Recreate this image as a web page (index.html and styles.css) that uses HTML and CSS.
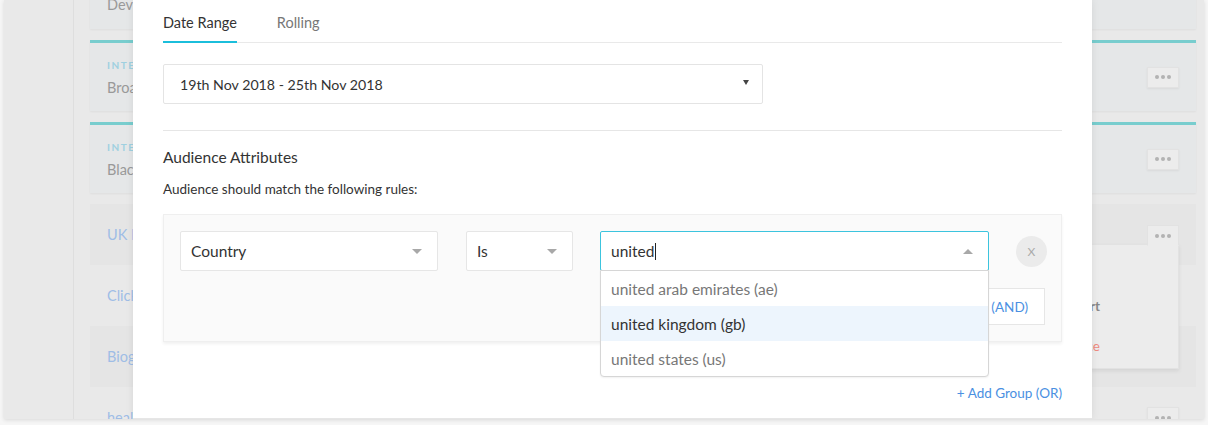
FILE: index.html
```html
<!DOCTYPE html>
<html lang="en">
<head>
<meta charset="utf-8">
<title>Audience</title>
<link rel="stylesheet" href="styles.css">
</head>
<body>
<div class="screen">
  <div class="app">
    <aside class="sidebar"></aside>
    <main class="main">
      <div class="list">
        <div class="card card-top"><div class="card-body"><span class="name">Device users</span></div></div>
        <div class="card card-active">
          <div class="card-body">
            <div class="info"><span class="tag">INTEREST</span><span class="name">Broadband</span></div>
            <span class="dots"><i></i><i></i><i></i></span>
          </div>
        </div>
        <div class="card card-active">
          <div class="card-body">
            <div class="info"><span class="tag">INTEREST</span><span class="name">Black Friday</span></div>
            <span class="dots"><i></i><i></i><i></i></span>
          </div>
        </div>
        <div class="row row-stripe">
          <span class="link">UK Broadband</span>
          <div class="menu-wrap">
            <span class="dots dots-open"><i></i><i></i><i></i></span>
            <div class="popover">
              <span class="pop-item">Export</span>
              <span class="pop-item pop-danger">Remove audience</span>
            </div>
          </div>
        </div>
        <div class="row"><span class="link">Clickers</span></div>
        <div class="row row-stripe"><span class="link">Biography</span></div>
        <div class="row">
          <span class="link">health</span>
          <span class="dots"><i></i><i></i><i></i></span>
        </div>
      </div>
    </main>
  </div>

  <div class="modal">
    <div class="tabs">
      <span class="tab tab-active">Date Range</span>
      <span class="tab">Rolling</span>
    </div>
    <div class="date-select">
      <span>19th Nov 2018 - 25th Nov 2018</span>
      <span class="caret-dark"></span>
    </div>
    <hr class="divider">
    <h2 class="section-title">Audience Attributes</h2>
    <p class="hint">Audience should match the following rules:</p>
    <div class="rules">
      <div class="rule-row">
        <div class="select sel-attr"><span>Country</span><span class="caret"></span></div>
        <div class="select sel-op"><span>Is</span><span class="caret"></span></div>
        <div class="combo">
          <div class="select sel-value"><span class="typed">united<span class="cursor"></span></span><span class="caret caret-up"></span></div>
          <ul class="options">
            <li>united arab emirates (ae)</li>
            <li class="opt-hover">united kingdom (gb)</li>
            <li>united states (us)</li>
          </ul>
        </div>
        <span class="remove">X</span>
      </div>
      <div class="rule-actions">
        <span class="add-and">+ Add Rule (AND)</span>
      </div>
    </div>
    <div class="group-actions"><span class="add-or">+ Add Group (OR)</span></div>
  </div>
</div>
</body>
</html>
```
FILE: styles.css
```css
* { box-sizing: border-box; }
html, body { margin: 0; padding: 0; }
body {
  background: #f6f6f6;
  font-family: Lato, "Open Sans", sans-serif;
  color: #333;
  width: 1208px;
  height: 425px;
  overflow: hidden;
}
.screen {
  position: relative;
  margin: 0 4px;
  width: 1200px;
  height: 419px;
  overflow: hidden;
  box-shadow: 0 1px 4px rgba(0,0,0,0.12);
}
.app {
  display: flex;
  height: 100%;
  background: #e9e9e9;
}
.sidebar {
  width: 70px;
  flex: none;
  border-right: 1px solid #dedede;
  background: #e9e9e9;
}
.main {
  flex: 1;
  padding: 0 8px 0 16px;
}
.list {
  display: flex;
  flex-direction: column;
  margin-top: -30px;
}
.card {
  background: #e5e7e8;
  box-shadow: 0 1px 2px rgba(0,0,0,0.05);
  margin-bottom: 11px;
}
.card-top { height: 59px; }
.card-top .card-body { padding-top: 26px; align-items: flex-start; }
.card-active {
  border-top: 3px solid #78cdce;
  height: 71px;
}
.card-body {
  display: flex;
  align-items: center;
  justify-content: space-between;
  height: 100%;
  padding: 0 17px;
}
.info { display: flex; flex-direction: column; gap: 8px; }
.tag {
  font-size: 10px;
  letter-spacing: 1.5px;
  color: #9fd0e0;
  font-weight: 700;
  line-height: 12px;
}
.name { font-size: 14.5px; color: #999; line-height: 17px; }
.dots {
  width: 32px;
  height: 21px;
  background: #ececec;
  border: 1px solid #e2e2e2;
  box-shadow: 0 1px 2px rgba(0,0,0,0.06);
  display: flex;
  align-items: center;
  justify-content: center;
  gap: 2px;
}
.dots i {
  width: 4px;
  height: 4px;
  border-radius: 50%;
  background: #b3b3b3;
}
.row {
  height: 61px;
  display: flex;
  align-items: center;
  justify-content: space-between;
  padding: 0 17px;
  position: relative;
}
.row-stripe { background: #e5e5e5; }
.link { font-size: 14.5px; color: #9fbde6; }
.menu-wrap { position: relative; align-self: flex-start; margin-top: 21px; }
.dots-open {
  position: relative;
  z-index: 2;
  box-shadow: none;
  border-bottom-color: #ececec;
}
.popover {
  position: absolute;
  right: 0;
  top: 19px;
  width: 200px;
  height: 125px;
  background: #ececec;
  border: 1px solid #e2e2e2;
  box-shadow: 0 2px 4px rgba(0,0,0,0.08);
  z-index: 1;
  display: flex;
  flex-direction: column;
  align-items: flex-end;
  padding: 53px 78px 0 0;
  gap: 24px;
}
.pop-item { font-size: 13.5px; color: #888; font-weight: 700; }
.pop-danger { color: #ef8a80; font-weight: 400; }

/* modal */
.modal {
  position: absolute;
  z-index: 10;
  left: 129px;
  top: 0;
  width: 959px;
  height: 419px;
  background: #fff;
  padding: 0 30px;
  box-shadow: 0 0 8px rgba(0,0,0,0.08);
  border-bottom: 1px solid #e6e6e6;
}
.tabs {
  display: flex;
  gap: 40px;
  border-bottom: 1px solid #e9e9e9;
  height: 43px;
}
.tab {
  font-size: 14.5px;
  color: #777;
  padding-top: 14px;
  height: 43px;
}
.tab-active {
  color: #333;
  border-bottom: 2px solid #1bbedb;
  margin-bottom: -1px;
}
.date-select {
  margin-top: 21px;
  width: 600px;
  height: 40px;
  border: 1px solid #e4e4e4;
  border-radius: 2px;
  display: flex;
  align-items: center;
  justify-content: space-between;
  padding: 0 13px 0 16px;
  font-size: 14.2px;
  color: #333;
}
.caret-dark {
  width: 0; height: 0;
  border-left: 3.5px solid transparent;
  border-right: 3.5px solid transparent;
  border-top: 5px solid #444;
  margin-top: -3px;
}
.divider {
  border: 0;
  border-top: 1px solid #e6e6e6;
  margin: 26px 0 0;
}
.section-title {
  font-size: 15.5px;
  font-weight: 400;
  margin: 17px 0 0;
  color: #333;
}
.hint {
  font-size: 13.5px;
  margin: 15px 0 0;
  color: #333;
}
.rules {
  margin-top: 17px;
  height: 128px;
  background: #fafafa;
  border: 1px solid #efefef;
  box-shadow: 0 2px 3px rgba(0,0,0,0.06);
  padding: 16px 16px 0;
}
.rule-row {
  display: flex;
  align-items: center;
}
.rule-row > * { flex: none; }
.select {
  height: 40px;
  background: #fff;
  border: 1px solid #e6e6e6;
  border-radius: 2px;
  display: flex;
  align-items: center;
  justify-content: space-between;
  padding: 0 10px;
  font-size: 15.5px;
  color: #333;
}
.sel-attr { width: 258px; margin-right: 28px; }
.sel-op { width: 107px; margin-right: 27px; }
.combo { position: relative; width: 389px; z-index: 3; margin-right: 27px; }
.sel-value {
  border-color: #3cc4de;
  width: 389px;
}
.typed { display: flex; align-items: center; }
.cursor {
  display: inline-block;
  width: 1px;
  height: 17px;
  background: #222;
  margin-left: 1px;
}
.caret {
  width: 0; height: 0;
  border-left: 5px solid transparent;
  border-right: 5px solid transparent;
  border-top: 5px solid #a8a8a8;
  margin-right: 5px;
}
.caret-up {
  border-top: 0;
  border-bottom: 5px solid #a8a8a8;
}
.options {
  position: absolute;
  left: 0;
  top: 39px;
  width: 389px;
  margin: 0;
  padding: 0;
  list-style: none;
  background: #fff;
  border: 1px solid #d6d6d6;
  border-radius: 0 0 4px 4px;
  box-shadow: 0 1px 2px rgba(0,0,0,0.06);
}
.options li {
  height: 35px;
  display: flex;
  align-items: center;
  padding: 0 10px;
  font-size: 15.5px;
  color: #777;
}
.options li.opt-hover { background: #edf5fd; color: #333; }
.remove {
  width: 31px;
  height: 31px;
  border-radius: 50%;
  background: #ebebeb;
  color: #aaa;
  font-size: 12px;
  display: flex;
  align-items: center;
  justify-content: center;
}
.rule-actions {
  display: flex;
  justify-content: flex-end;
  margin-top: 17px;
}
.add-and {
  height: 37px;
  border: 1px solid #e6e6e6;
  background: #fff;
  font-size: 13.5px;
  color: #4a90e2;
  padding: 0 16px;
  display: flex;
  align-items: center;
}
.group-actions {
  display: flex;
  justify-content: flex-end;
  margin-top: 43px;
}
.add-or { font-size: 13.5px; color: #4a90e2; }
```
